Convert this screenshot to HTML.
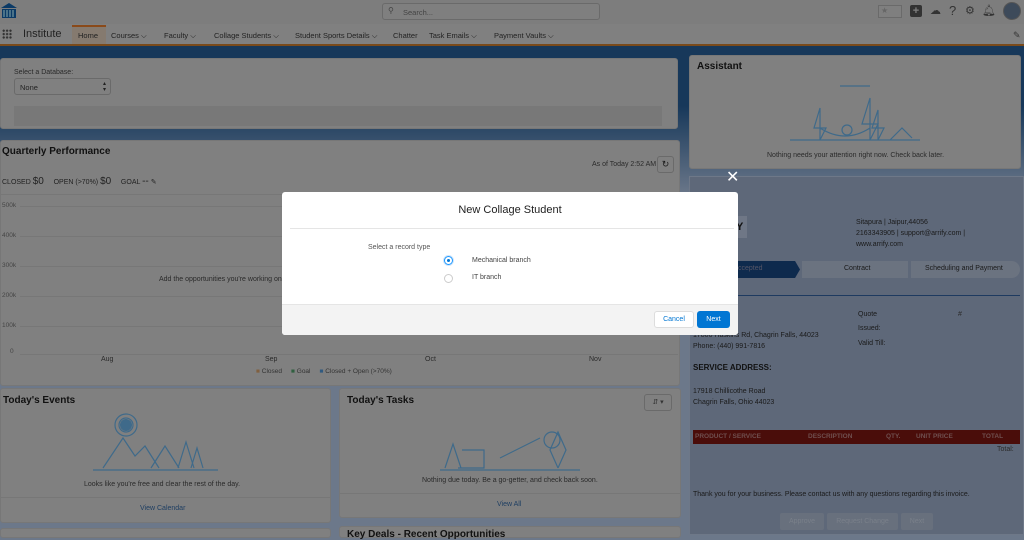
<!DOCTYPE html>
<html><head><meta charset="utf-8"><style>
*{box-sizing:border-box;margin:0;padding:0}
body{width:1024px;height:535px;overflow:hidden;position:relative;background:#6c788a;font-family:"Liberation Sans",sans-serif;color:#1a1a1a}
.a{position:absolute}
.card{position:absolute;background:#808080;border-radius:3px;border:1px solid #777}
.t{font-size:10px;font-weight:bold;color:#111}
.s{font-size:7px;color:#2a2a2a}
.nav span{position:absolute;top:31px;font-size:7.5px;color:#222}
</style></head><body>
<div class="a" style="left:0;top:0;width:1024px;height:24px;background:#7d7d7d"></div>
<div class="a" style="left:0;top:24px;width:1024px;height:20px;background:#808080"></div>
<div class="a" style="left:0;top:44px;width:1024px;height:2px;background:#7a4a1a"></div>
<div class="a" style="left:0;top:46px;width:1024px;height:60px;background:#17385a"></div>
<div class="a" style="left:0;top:106px;width:1024px;height:90px;background:linear-gradient(#17385a,#6c788a)"></div>
<svg class="a" style="left:0;top:2px" width="18" height="18" viewBox="0 0 18 18"><path d="M1 6L9 1L17 6Z" fill="#0b3a66"/><rect x="2" y="7" width="14" height="9" fill="#0b3a66"/><path d="M4 8v7M7 8v7M10 8v7M13 8v7" stroke="#8aa" stroke-width="1"/></svg>
<div class="a" style="left:382px;top:3px;width:218px;height:17px;border:1px solid #6a6a6a;border-radius:3px;background:#7f7f7f;font-size:7.5px;color:#444;padding:4px 0 0 20px">Search...</div>
<div class="a" style="left:388px;top:6px;font-size:8px;color:#444">⚲</div>
<div class="a" style="left:878px;top:5px;width:24px;height:13px;border:1px solid #6a6a6a;background:#7f7f7f;font-size:8px;color:#666;padding-left:2px">★</div>
<div class="a" style="left:910px;top:5px;width:12px;height:12px;background:#333;border-radius:2px;color:#808080;font-size:11px;line-height:12px;text-align:center;font-weight:bold">+</div>
<div class="a" style="left:930px;top:4px;font-size:11px;color:#333">☁</div>
<div class="a" style="left:949px;top:3px;font-size:13px;color:#333">?</div>
<div class="a" style="left:965px;top:4px;font-size:11px;color:#333">⚙</div>
<div class="a" style="left:982px;top:4px;font-size:11px;color:#333">🔔︎</div>
<div class="a" style="left:1003px;top:2px;width:18px;height:18px;border-radius:50%;background:#3d4a5a;border:1px solid #555"></div>
<div class="a" style="left:2px;top:29px;width:10px;height:10px;background:radial-gradient(circle,#333 1px,transparent 1.3px) 0 0/3.4px 3.4px"></div>
<div class="a" style="left:23px;top:28px;font-size:11px;color:#222">Institute</div>
<div class="a" style="left:72px;top:25px;width:34px;height:19px;background:#857a6f;border-top:2px solid #8a4a1a"></div>
<div class="nav"><span style="left:78px">Home</span><span style="left:111px">Courses ⌵</span><span style="left:164px">Faculty ⌵</span><span style="left:214px">Collage Students ⌵</span><span style="left:295px">Student Sports Details ⌵</span><span style="left:393px">Chatter</span><span style="left:429px">Task Emails ⌵</span><span style="left:494px">Payment Vaults ⌵</span></div>
<div class="a" style="left:1013px;top:30px;font-size:9px;color:#333">✎</div>

<div class="card" style="left:0;top:58px;width:678px;height:71px"></div>
<div class="a s" style="left:14px;top:69px">Select a Database:</div>
<div class="a" style="left:14px;top:78px;width:97px;height:17px;border:1px solid #6a6a6a;border-radius:3px;font-size:7.5px;padding:4px 0 0 5px;color:#222">None<span style="position:absolute;right:4px;top:2px;font-size:6px;line-height:6px">▴<br>▾</span></div>
<div class="a" style="left:14px;top:106px;width:648px;height:20px;background:#787878"></div>

<div class="card" style="left:0;top:140px;width:680px;height:246px"></div>
<div class="a t" style="left:2px;top:146px">Quarterly Performance</div>
<div class="a s" style="left:592px;top:161px">As of Today 2:52 AM</div>
<div class="a" style="left:657px;top:156px;width:17px;height:17px;border:1px solid #6a6a6a;border-radius:3px;font-size:9px;text-align:center;line-height:15px">↻</div>
<div class="a" style="left:2px;top:176px;font-size:7px;color:#222">CLOSED <b style="font-size:10px;font-weight:normal">$0</b>&nbsp;&nbsp;&nbsp;&nbsp; OPEN (&gt;70%) <b style="font-size:10px;font-weight:normal">$0</b>&nbsp;&nbsp;&nbsp;&nbsp; GOAL <b style="font-size:10px;font-weight:normal">--</b> ✎</div>
<div class="a" style="left:0;top:194px;width:680px;border-top:1px solid #777"></div>
<div class="a" style="left:2px;top:200px;width:676px;height:155px;font-size:6.5px;color:#444">
<div style="position:absolute;top:2px">500k</div><div style="position:absolute;top:32px">400k</div><div style="position:absolute;top:62px">300k</div><div style="position:absolute;top:92px">200k</div><div style="position:absolute;top:122px">100k</div><div style="position:absolute;left:8px;top:148px">0</div>
<div style="position:absolute;left:18px;right:0;top:6px;border-top:1px solid #777"></div><div style="position:absolute;left:18px;right:0;top:36px;border-top:1px solid #777"></div><div style="position:absolute;left:18px;right:0;top:66px;border-top:1px solid #777"></div><div style="position:absolute;left:18px;right:0;top:96px;border-top:1px solid #777"></div><div style="position:absolute;left:18px;right:0;top:126px;border-top:1px solid #777"></div><div style="position:absolute;left:18px;right:0;top:154px;border-top:1px solid #777"></div>
</div>
<div class="a s" style="left:159px;top:276px">Add the opportunities you're working on</div>
<div class="a s" style="left:101px;top:356px">Aug</div><div class="a s" style="left:265px;top:356px">Sep</div><div class="a s" style="left:425px;top:356px">Oct</div><div class="a s" style="left:589px;top:356px">Nov</div>
<div class="a" style="left:256px;top:368px;font-size:6.5px;color:#333"><span style="color:#806040">■</span> Closed &nbsp;&nbsp;&nbsp; <span style="color:#306040">■</span> Goal &nbsp;&nbsp;&nbsp; <span style="color:#305a80">■</span> Closed + Open (&gt;70%)</div>

<div class="card" style="left:0;top:388px;width:331px;height:135px"></div>
<div class="a t" style="left:3px;top:395px">Today's Events</div>
<svg class="a" style="left:93px;top:410px" width="125" height="62" viewBox="0 0 125 62"><g fill="none" stroke="#3f6a8a" stroke-width="1.2"><circle cx="33" cy="15" r="7"/><circle cx="33" cy="15" r="11"/><path d="M0 60H125M10 58l20-30 12 18 10-10 14 22M58 58l14-22 14 22M85 58l8-26 8 26M98 58l6-20 6 20"/></g><circle cx="33" cy="15" r="6" fill="#3f6a8a"/></svg>
<div class="a s" style="left:84px;top:481px">Looks like you're free and clear the rest of the day.</div>
<div class="a" style="left:0;top:497px;width:331px;border-top:1px solid #777"></div>
<div class="a" style="left:140px;top:505px;font-size:7px;color:#1e3e62">View Calendar</div>

<div class="card" style="left:339px;top:388px;width:342px;height:130px"></div>
<div class="a t" style="left:347px;top:395px">Today's Tasks</div>
<div class="a" style="left:644px;top:394px;width:28px;height:17px;border:1px solid #6a6a6a;border-radius:3px;font-size:7px;text-align:center;line-height:15px;color:#333">⇵ ▾</div>
<svg class="a" style="left:440px;top:424px" width="140" height="48" viewBox="0 0 140 48"><g fill="none" stroke="#3f6a8a" stroke-width="1.2"><path d="M0 46H140M5 44l8-24 8 24M18 44h26V26H22M60 34l40-20M118 44l-8-18 8-18 8 18-8 18"/><circle cx="112" cy="16" r="8"/></g></svg>
<div class="a s" style="left:422px;top:477px">Nothing due today. Be a go-getter, and check back soon.</div>
<div class="a" style="left:339px;top:493px;width:342px;border-top:1px solid #777"></div>
<div class="a" style="left:497px;top:501px;font-size:7px;color:#1e3e62">View All</div>
<div class="card" style="left:0;top:528px;width:331px;height:10px"></div>
<div class="card" style="left:339px;top:526px;width:342px;height:12px"></div>
<div class="a t" style="left:347px;top:529px">Key Deals - Recent Opportunities</div>

<div class="card" style="left:689px;top:55px;width:332px;height:114px"></div>
<div class="a t" style="left:697px;top:61px">Assistant</div>
<svg class="a" style="left:790px;top:78px" width="130" height="66" viewBox="0 0 130 66"><g fill="none" stroke="#3f6a8a" stroke-width="1.2"><path d="M0 62H130M30 62V30l-6 20h12zM80 62V20l-8 26h16zM88 62V32l-6 18h12zM30 50q25 16 50 0M100 62l12-12 10 10M50 8h30"/><circle cx="57" cy="52" r="5"/></g></svg>
<div class="a s" style="left:767px;top:152px">Nothing needs your attention right now. Check back later.</div>

<div class="a" style="left:689px;top:176px;width:335px;height:359px;background:#5e6879;border:1px solid #6e7888"></div>
<div class="a" style="left:736px;top:216px;width:11px;height:22px;background:#6f7786;font-size:11px;font-weight:bold;color:#111;line-height:22px">Y</div>
<div class="a s" style="left:856px;top:217px;line-height:11px;color:#1a1a1a">Sitapura | Jaipur,44056<br>2163343905 | support@arrify.com |<br>www.arrify.com</div>
<div class="a" style="left:738px;top:261px;width:62px;height:17px;background:#0e2a4d;clip-path:polygon(0 0,92% 0,100% 50%,92% 100%,0 100%)"></div>
<div class="a" style="left:738px;top:265px;font-size:7px;color:#556">ccepted</div>
<div class="a" style="left:802px;top:261px;width:218px;height:17px;background:#6b7380;border-radius:0 9px 9px 0"></div>
<div class="a" style="left:908px;top:261px;width:3px;height:17px;background:#5e6879"></div>
<div class="a s" style="left:844px;top:265px;color:#1a1a1a">Contract</div>
<div class="a s" style="left:925px;top:265px;color:#1a1a1a">Scheduling and Payment</div>
<div class="a" style="left:738px;top:295px;width:282px;border-top:1px solid #1e3a60"></div>
<div class="a s" style="left:858px;top:311px;color:#1a1a1a">Quote</div><div class="a s" style="left:958px;top:311px">#</div>
<div class="a s" style="left:858px;top:325px;color:#1a1a1a">Issued:</div>
<div class="a s" style="left:858px;top:340px;color:#1a1a1a">Valid Till:</div>
<div class="a s" style="left:693px;top:330px;line-height:11px;color:#1a1a1a">17800 Haskins Rd, Chagrin Falls, 44023<br>Phone: (440) 991-7816</div>
<div class="a" style="left:693px;top:363px;font-size:8px;font-weight:bold;color:#111">SERVICE ADDRESS:</div>
<div class="a s" style="left:693px;top:386px;line-height:11px;color:#1a1a1a">17918 Chillicothe Road<br>Chagrin Falls, Ohio 44023</div>
<div class="a" style="left:693px;top:430px;width:327px;height:14px;background:#4a0d0a;font-size:6.5px;font-weight:bold;color:#6f4f4f;line-height:14px">
<span style="position:absolute;left:2px">PRODUCT / SERVICE</span><span style="position:absolute;left:115px">DESCRIPTION</span><span style="position:absolute;left:193px">QTY.</span><span style="position:absolute;left:223px">UNIT PRICE</span><span style="position:absolute;left:289px">TOTAL</span></div>
<div class="a s" style="left:997px;top:446px">Total:</div>
<div class="a s" style="left:693px;top:491px;color:#1a1a1a">Thank you for your business. Please contact us with any questions regarding this invoice.</div>
<div class="a" style="left:780px;top:513px;width:44px;height:17px;background:#68707d;border-radius:2px;font-size:7px;color:#7a808a;text-align:center;line-height:17px">Approve</div>
<div class="a" style="left:827px;top:513px;width:71px;height:17px;background:#68707d;border-radius:2px;font-size:7px;color:#7a808a;text-align:center;line-height:17px">Request Change</div>
<div class="a" style="left:901px;top:513px;width:32px;height:17px;background:#68707d;border-radius:2px;font-size:7px;color:#7a808a;text-align:center;line-height:17px">Next</div>

<div class="a" style="left:726px;top:169px;font-size:16px;color:#fff;line-height:18px">✕</div>
<div class="a" style="left:282px;top:192px;width:456px;height:143px;background:#fff;border-radius:3px;overflow:hidden">
<div class="a" style="left:0;top:12px;width:456px;text-align:center;font-size:11px;color:#222">New Collage Student</div>
<div class="a" style="left:8px;top:36px;width:444px;border-top:1px solid #e5e5e5"></div>
<div class="a" style="left:86px;top:52px;font-size:7px;color:#555">Select a record type</div>
<div class="a" style="left:162px;top:64px;width:9px;height:9px;border-radius:50%;border:1px solid #1b96ff;box-shadow:0 0 0 1px #cfe6fb"><div style="margin:2px;width:3px;height:3px;border-radius:50%;background:#0176d3"></div></div>
<div class="a" style="left:190px;top:65px;font-size:7px;color:#444">Mechanical branch</div>
<div class="a" style="left:162px;top:82px;width:9px;height:9px;border-radius:50%;border:1px solid #ccc"></div>
<div class="a" style="left:190px;top:82px;font-size:7px;color:#444">IT branch</div>
<div class="a" style="left:0;top:112px;width:456px;height:31px;background:#f3f3f3;border-top:1px solid #e5e5e5"></div>
<div class="a" style="left:372px;top:119px;width:40px;height:17px;background:#fff;border:1px solid #ddd;border-radius:3px;font-size:7px;color:#0176d3;text-align:center;line-height:15px">Cancel</div>
<div class="a" style="left:415px;top:119px;width:33px;height:17px;background:#0176d3;border-radius:3px;font-size:7px;color:#fff;text-align:center;line-height:17px">Next</div>
</div>
</body></html>
